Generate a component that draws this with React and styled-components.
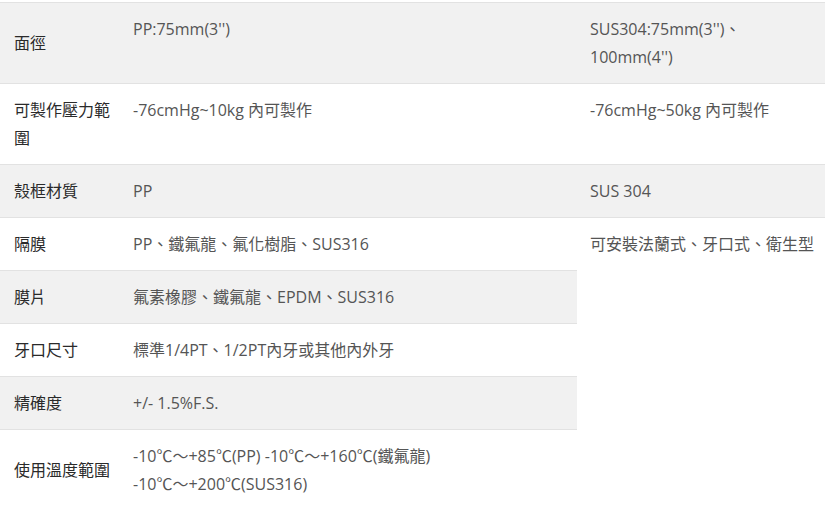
import styled, { createGlobalStyle } from "styled-components";

const GlobalStyle = createGlobalStyle`
  html, body {
    margin: 0;
    padding: 0;
    background: #ffffff;
  }
  body {
    font-family: "Open Sans", "Noto Sans CJK TC", sans-serif;
  }
`;

const rows = [
  {
    label: "面徑",
    pp: "PP:75mm(3'')",
    sus: (
      <>
        SUS304:75mm(3'')、
        <br />
        100mm(4'')
      </>
    ),
  },
  {
    label: "可製作壓力範圍",
    pp: "-76cmHg~10kg 內可製作",
    sus: "-76cmHg~50kg 內可製作",
  },
  { label: "殼框材質", pp: "PP", sus: "SUS 304" },
  {
    label: "隔膜",
    pp: "PP、鐵氟龍、氟化樹脂、SUS316",
    sus: "可安裝法蘭式、牙口式、衛生型",
    span: 5,
  },
  { label: "膜片", pp: "氟素橡膠、鐵氟龍、EPDM、SUS316" },
  { label: "牙口尺寸", pp: "標準1/4PT、1/2PT內牙或其他內外牙" },
  { label: "精確度", pp: "+/- 1.5%F.S." },
  {
    label: "使用溫度範圍",
    pp: (
      <>
        -10℃～+85℃(PP) -10℃～+160℃(鐵氟龍)
        <br />
        -10℃～+200℃(SUS316)
      </>
    ),
  },
];

export default function App() {
  return (
    <>
      <GlobalStyle />
      <Wrapper>
        <SpecTable>
          <colgroup>
            <col style={{ width: 120 }} />
            <col style={{ width: 457 }} />
            <col />
          </colgroup>
          <tbody>
            {rows.map((row, i) => (
              <Row key={row.label} $striped={i % 2 === 0}>
                <Label>{row.label}</Label>
                <Cell>{row.pp}</Cell>
                {row.sus && (
                  <Cell rowSpan={row.span || 1} $plain={!!row.span}>
                    {row.sus}
                  </Cell>
                )}
              </Row>
            ))}
          </tbody>
        </SpecTable>
      </Wrapper>
    </>
  );
}

const Wrapper = styled.div`
  width: 825px;
  padding-top: 2px;
`;

const SpecTable = styled.table`
  width: 100%;
  border-collapse: collapse;
  table-layout: fixed;
  font-size: 16px;
  line-height: 28px;
  color: #555555;
`;

const Row = styled.tr`
  background-color: ${(p) => (p.$striped ? "#f1f1f1" : "#ffffff")};
  border-top: 1px solid #e2e2e2;
`;

const Label = styled.td`
  padding: 12px 4px 12px 14px;
  vertical-align: middle;
  color: #2a2a2a;
  font-weight: 400;
`;

const Cell = styled.td`
  padding: 12px 4px 12px 13px;
  vertical-align: top;
  background-color: ${(p) => (p.$plain ? "#ffffff" : "inherit")};
`;
